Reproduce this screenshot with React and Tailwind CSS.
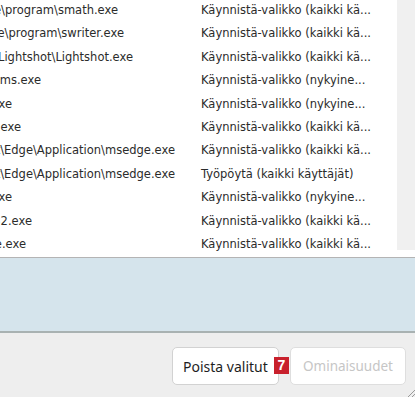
import React from "react";

const rows = [
  ["Office\\program\\smath.exe", "w-[118px]", "Käynnistä-valikko (kaikki kä..."],
  ["Office\\program\\swriter.exe", "w-[124px]", "Käynnistä-valikko (kaikki kä..."],
  ["Skillbrains\\Lightshot\\Lightshot.exe", "w-[133px]", "Käynnistä-valikko (kaikki kä..."],
  ["systems.exe", "w-[41px]", "Käynnistä-valikko (nykyine..."],
  ["e.exe", "w-[12px]", "Käynnistä-valikko (nykyine..."],
  ["e.exe", "w-[21px]", "Käynnistä-valikko (kaikki kä..."],
  ["Microsoft\\Edge\\Application\\msedge.exe", "w-[175px]", "Käynnistä-valikko (kaikki kä..."],
  ["Microsoft\\Edge\\Application\\msedge.exe", "w-[175px]", "Työpöytä (kaikki käyttäjät)"],
  ["e.exe", "w-[12px]", "Käynnistä-valikko (nykyine..."],
  ["32.exe", "w-[32px]", "Käynnistä-valikko (kaikki kä..."],
  ["e.exe", "w-[26px]", "Käynnistä-valikko (kaikki kä..."],
];

export default function App() {
  return (
    <div className="w-[415px] h-[397px] overflow-hidden bg-[#eeeeee] flex flex-col font-['DejaVu_Sans',sans-serif]">
      <div className="h-[257px] bg-white flex shrink-0">
        <div className="flex-1 overflow-hidden">
          <div className="-mt-[1px] flex flex-col">
            {rows.map(([a, w, b], i) => (
              <div key={i} className="h-[23.4px] flex items-center text-[11.5px] text-[#2b2b2b] whitespace-nowrap">
                <div className="w-[201px] shrink-0">
                  <div className={`${w} overflow-hidden flex justify-end`}>
                    <span className="shrink-0">{a}</span>
                  </div>
                </div>
                <span>{b}</span>
              </div>
            ))}
          </div>
        </div>
        <div className="w-[18px] h-[250px] bg-[#f0f0f0] shrink-0" />
      </div>
      <div className="h-px bg-[#b4b4b4] shrink-0" />
      <div className="h-[73px] bg-[#d5e4ec] shrink-0" />
      <div className="h-[2px] bg-[#a9b2b2] shrink-0" />
      <div className="flex-1 relative flex justify-end items-start pt-[14px] pr-[9px] gap-[11px] font-['Noto_Sans',sans-serif]">
        <div className="relative w-[107px] h-[38px] rounded-[5px] border border-[#d2d2d2] bg-white flex items-center pl-[10px] text-[14px] text-[#1e1e1e]">
          Poista valitut
          <span className="absolute left-[101px] top-[9px] w-[15px] h-[17px] bg-[#c8202c] text-white text-[14px] font-bold leading-[17px] text-center font-['Liberation_Sans',sans-serif]">7</span>
        </div>
        <div className="w-[116px] h-[38px] rounded-[5px] border border-[#dedede] bg-white flex items-center justify-center text-[13.5px] text-[#c6c6c6]">
          Ominaisuudet
        </div>
        <svg className="absolute right-0 bottom-0" width="8" height="8" viewBox="0 0 8 8">
          <line x1="8" y1="1" x2="1" y2="8" stroke="#9a9a9a" strokeWidth="1" />
          <line x1="8" y1="5" x2="5" y2="8" stroke="#9a9a9a" strokeWidth="1" />
        </svg>
      </div>
    </div>
  );
}
